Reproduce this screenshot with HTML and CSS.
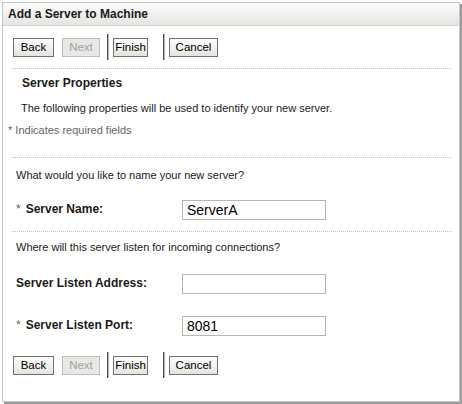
FILE: index.html
```html
<!DOCTYPE html>
<html lang="en">
<head>
  <meta charset="UTF-8" />
  <title>Add a Server to Machine</title>
  <link rel="stylesheet" href="styles.css">
</head>
<body>
  <div class="dialog">
    <div class="dialog-title">Add a Server to Machine</div>

    <div class="dialog-body">
      <div class="button-bar">
        <button class="btn btn-back">Back</button>
        <button class="btn btn-next" disabled>Next</button>
        <span class="sep"></span>
        <button class="btn btn-finish">Finish</button>
        <span class="sep"></span>
        <button class="btn btn-cancel">Cancel</button>
      </div>

      <div class="section section-intro">
        <h2 class="section-title">Server Properties</h2>
        <p class="intro-text">The following properties will be used to identify your new server.</p>
        <p class="required-note"><span class="req">*</span> Indicates required fields</p>
      </div>

      <div class="section section-name">
        <p class="question">What would you like to name your new server?</p>
        <div class="field field-first">
          <label class="field-label"><span class="req">*</span>Server Name:</label>
          <input class="field-input" type="text" value="ServerA" />
        </div>
      </div>

      <div class="section section-listen">
        <p class="question">Where will this server listen for incoming connections?</p>
        <div class="field field-first">
          <label class="field-label">Server Listen Address:</label>
          <input class="field-input" type="text" value="" />
        </div>
        <div class="field field-next">
          <label class="field-label"><span class="req">*</span>Server Listen Port:</label>
          <input class="field-input" type="text" value="8081" />
        </div>
      </div>

      <div class="button-bar button-bar-bottom">
        <button class="btn btn-back">Back</button>
        <button class="btn btn-next" disabled>Next</button>
        <span class="sep"></span>
        <button class="btn btn-finish">Finish</button>
        <span class="sep"></span>
        <button class="btn btn-cancel">Cancel</button>
      </div>
    </div>
  </div>
</body>
</html>
```

FILE: styles.css
```css
body {
  margin: 0;
  padding: 2px;
  background-color: #fff;
  font-family: "Liberation Sans", Arial, sans-serif;
  font-size: 11px;
  color: #1a1a1a;
}

.dialog {
  box-sizing: border-box;
  width: 458px;
  height: 400px;
  border: 1px solid #c2c6ca;
  box-shadow: 2px 2px 0 #9c9c9c;
  background-color: #fff;
}

.dialog-title {
  height: 22px;
  line-height: 22px;
  padding-left: 5px;
  font-weight: bold;
  font-size: 12px;
  color: #1a1a1a;
  background: linear-gradient(#fbfbfa, #e5e5e1);
  border-bottom: 1px solid #d6d7d3;
}

.dialog-body {
  padding: 0 7px 0 9px;
}

.button-bar {
  display: flex;
  align-items: center;
  height: 42px;
  padding-left: 1px;
}

.button-bar-bottom {
  height: auto;
  padding-top: 5px;
}

.btn {
  box-sizing: border-box;
  height: 19px;
  padding: 0;
  font-family: "Liberation Sans", Arial, sans-serif;
  font-size: 11.5px;
  color: #000;
  border: 1px solid #707070;
  border-radius: 0;
  background: linear-gradient(#fdfdfc, #e4e4df);
}

.btn-back { width: 41px; }
.btn-next { width: 38px; margin-left: 8px; }
.btn-finish { width: 35px; }
.btn-cancel { width: 49px; }

.btn:disabled {
  color: #a0a0a0;
  border-color: #bdbdbd;
  background: #e8e8e4;
}

.sep {
  width: 1px;
  height: 26px;
  margin: 0 4px 0 7px;
  background-color: #4e4e4e;
  border-right: 1px solid #b4b4b4;
}

.btn-finish + .sep {
  margin-left: 15px;
}

.section {
  border-top: 1px dotted #c4c4c4;
}

.section p,
.section h2 {
  margin: 0;
  line-height: 14px;
}

.section-intro {
  padding-bottom: 20px;
}

.section-title {
  margin-top: 7px !important;
  padding-left: 10px;
  font-size: 12px;
  font-weight: bold;
}

.intro-text {
  margin-top: 11px !important;
  padding-left: 9px;
}

.required-note {
  margin: 8px 0 0 -4px !important;
  color: #666;
}

.req {
  color: #666;
  font-weight: normal;
  margin-right: 5px;
}

.required-note .req {
  margin-right: 0;
}

.question {
  padding-left: 4px;
}

.section-name .question {
  margin-top: 10px !important;
}

.section-listen .question {
  margin-top: 8px !important;
}

.field {
  display: flex;
  align-items: center;
  padding-left: 4px;
}

.section-name .field-first {
  margin-top: 18px;
}

.section-listen .field-first {
  margin-top: 20px;
}

.field-next {
  margin-top: 22px;
}

.section .field:last-child {
  margin-bottom: 11px;
}

.field-label {
  width: 166px;
  font-weight: bold;
  font-size: 12px;
  padding-bottom: 3px;
}

.field-input {
  box-sizing: border-box;
  width: 144px;
  height: 20px;
  margin: 0;
  padding: 0 4px;
  border: 1px solid #b8b8b0;
  font-family: "Liberation Sans", Arial, sans-serif;
  font-size: 14px;
  color: #000;
}
```
